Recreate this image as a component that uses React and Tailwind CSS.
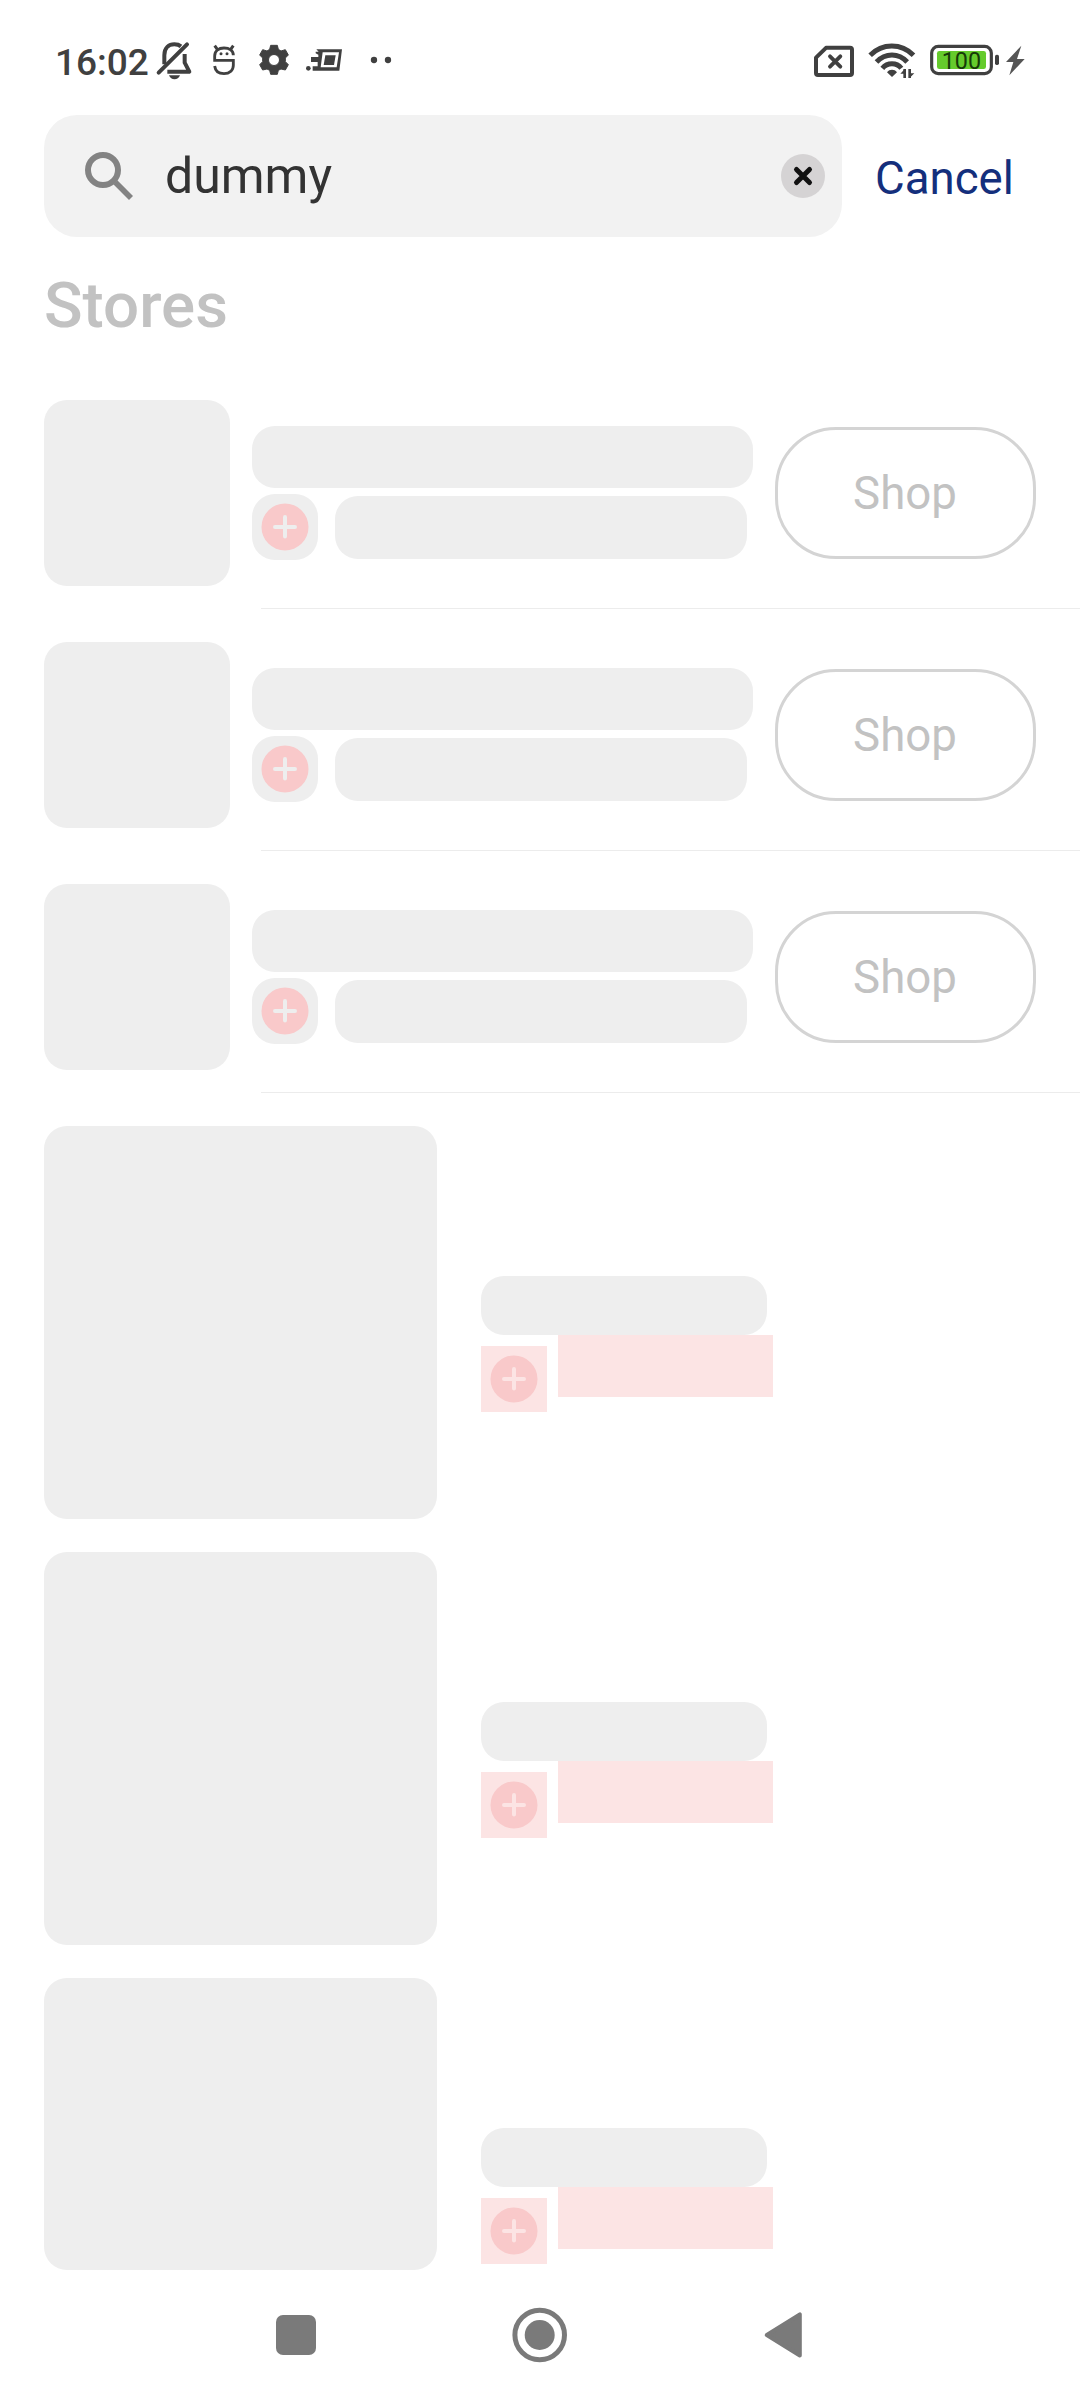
import React from "react";

const INK = "#404040";

function BellOff() {
  return (
    <svg className="h-10 w-10" viewBox="345 33 120 120" fill="none" stroke={INK} strokeWidth="12">
      <path d="M356 128 L441 43" strokeLinecap="round" />
      <path d="M373 103 V76 C373 53 387 43 403 43 C411 43 418 45 423 49" />
      <path d="M434 72 V98 L448 125 H382" strokeLinejoin="round" />
      <path d="M387 136 H420 C417 144 411 148 403.500 148 C396 148 390 144 387 136 Z" fill={INK} stroke="none" />
    </svg>
  );
}

function Ghost() {
  return (
    <svg className="h-10 w-[30px]" viewBox="510 33 90 120" fill="none" stroke={INK} strokeWidth="8.500">
      <path d="M580 76 C580 62 568 54 552 54 C536 54 524 62 524 78 V91 H580 V106 C580 122 568 131 552 131 C537 131 526 124 524 108" />
      <path d="M524 47 L532 58 M580 47 L572 58" strokeWidth="9" />
      <circle cx="543" cy="71" r="4.500" fill={INK} stroke="none" />
      <circle cx="561" cy="71" r="4.500" fill={INK} stroke="none" />
    </svg>
  );
}

function Gear() {
  return (
    <svg className="h-10 w-[34px]" viewBox="51 33 102 120">
      <path
        fillRule="evenodd"
        fill={INK}
        stroke={INK}
        strokeWidth="3"
        strokeLinejoin="round"
        d="M92 46 H112 L115 58 L123 63 L136 59 L145 75 L136 84 V95 L145 104 L136 120 L123 117 L115 121 L112 133 H92 L89 121 L81 117 L68 120 L59 104 L68 95 V84 L59 75 L68 59 L81 63 L89 58 Z M102 73.500 A16.500 16.500 0 1 0 102 106.500 A16.500 16.500 0 1 0 102 73.500 Z"
      />
    </svg>
  );
}

function SpeedCard() {
  return (
    <svg className="h-10 w-10" viewBox="195 33 120 120" fill={INK}>
      <path
        fillRule="evenodd"
        d="M229 58 H306 L298 122 H218 V109 H233 V96 H213 V81 H235 V74 L227 70 V65 H236 Z M248 67 L242 112 H290 L297 67 Z"
      />
      <path d="M256 76 H287 L282 105 H251 Z" />
      <circle cx="205" cy="115" r="7" />
    </svg>
  );
}

function Dots() {
  return (
    <svg className="h-10 w-[25px]" viewBox="387 33 75 120" fill={INK}>
      <circle cx="402" cy="90" r="9.500" />
      <circle cx="444" cy="90" r="9.500" />
    </svg>
  );
}

function SimOff() {
  return (
    <svg className="h-10 w-11" viewBox="36 33 132 120" fill="none" stroke={INK} strokeLinejoin="round">
      <path d="M78 53.500 H150 Q156 53.500 156 59 V129 Q156 135 150 135 H54 Q48 135 48 129 V83 Z" strokeWidth="12" />
      <path d="M90 79 L121 110 M121 79 L90 110" strokeWidth="11.500" strokeLinecap="round" />
    </svg>
  );
}

function Wifi() {
  return (
    <svg className="h-10 w-[50px]" viewBox="201 33 150 120" fill="none" stroke={INK} strokeWidth="15">
      <path d="M210.500 76 C247 39 304 39 340.500 76" />
      <path d="M229.500 96 C256 68 296 68 321.500 96" />
      <path d="M247 115 C262 97 290 97 304 115" />
      <path d="M261 127 C268 117 284 117 291 127 L276 141 Z" fill={INK} stroke="none" />
      <path d="M314 117 V144 M329 117 V144" strokeWidth="8" />
      <path d="M301 131 L315 116 V131 Z M343 130 L328 145 V130 Z" fill={INK} stroke="none" />
    </svg>
  );
}

function Battery() {
  return (
    <svg className="h-10 w-[72px]" viewBox="384 33 216 120">
      <rect x="395" y="49" width="179" height="82" rx="20" fill="#fff" stroke={INK} strokeWidth="9.500" />
      <rect x="411" y="63" width="147" height="54" rx="7" fill="#65cb2c" />
      <rect x="585" y="74" width="12" height="31" rx="5" fill={INK} />
      <text x="484" y="117" textAnchor="middle" fontSize="70" fontFamily="Roboto" fill="#163a08">
        100
      </text>
    </svg>
  );
}

function Bolt() {
  return (
    <svg className="h-10 w-[22px]" viewBox="612 33 66 120" fill="#555">
      <path d="M664 47 L618 96 H640 L628 136 L674 87 H651 Z" />
    </svg>
  );
}

function StatusBar() {
  return (
    <div className="flex h-[115px] items-start pt-[41px] pl-[55px]">
      <span className="w-[100px] pt-[2px] text-[37px] leading-[40px] font-medium text-[#404040]">16:02</span>
      <BellOff />
      <div className="ml-[15px] flex gap-[17px]">
        <Ghost />
        <Gear />
      </div>
      <div className="ml-[14px] flex gap-6">
        <SpeedCard />
        <Dots />
      </div>
      <div className="ml-auto flex pr-[54px]">
        <SimOff />
        <div className="ml-[11px] flex gap-[11px]">
          <Wifi />
          <Battery />
        </div>
        <div className="ml-1">
          <Bolt />
        </div>
      </div>
    </div>
  );
}

function SearchBar() {
  return (
    <div className="flex h-[122px] items-center pl-11">
      <div className="flex h-full w-[798px] items-center rounded-[33px] bg-[#f2f2f2] pr-[17px] pl-[41px]">
        <svg className="h-[48px] w-[48px] shrink-0" viewBox="165 153 144 144" fill="none" stroke="#838383">
          <circle cx="219" cy="207" r="45" strokeWidth="18" />
          <path d="M256 244 L303 291" strokeWidth="17" />
        </svg>
        <span className="ml-[32px] flex-1 text-[50px] leading-[60px] text-[#333]">dummy</span>
        <svg className="h-11 w-11" viewBox="0 0 44 44">
          <circle cx="22" cy="22" r="22" fill="#d5d3d4" />
          <path d="M15.500 15.500 L28.500 28.500 M28.500 15.500 L15.500 28.500" stroke="#111" strokeWidth="5" strokeLinecap="round" />
        </svg>
      </div>
      <span className="ml-[33px] pt-[5px] text-[45.6px] leading-[56px] text-[#142f7c]">Cancel</span>
    </div>
  );
}

function PlusBadge() {
  return (
    <svg className="h-[66px] w-[66px]" viewBox="0 0 66 66">
      <path
        fill="#f9c9ca"
        fillRule="evenodd"
        d="M33 9.500 A23.500 23.500 0 1 0 33 56.500 A23.500 23.500 0 1 0 33 9.500 Z M31 31 V23 A2 2 0 0 1 35 23 V31 H43 A2 2 0 0 1 43 35 H35 V42.500 A2 2 0 0 1 31 42.500 V35 H23 A2 2 0 0 1 23 31 Z"
      />
    </svg>
  );
}

function StoreRow() {
  return (
    <div className="h-[242px]">
      <div className="flex h-[208px] pl-11">
        <div className="h-[186px] w-[186px] rounded-[23px] bg-[#eee]" />
        <div className="ml-[22px] w-[501px] pt-[26px]">
          <div className="h-[62px] rounded-[23px] bg-[#eee]" />
          <div className="mt-[6px] flex">
            <div className="h-[66px] w-[66px] rounded-[23px] bg-[#eee]">
              <PlusBadge />
            </div>
            <div className="mt-[2px] ml-[17px] h-[63px] w-[412px] rounded-[23px] bg-[#eee]" />
          </div>
        </div>
        <button className="mt-[27px] ml-[22px] flex h-[132px] w-[261px] items-center justify-center rounded-[61px] border-[3px] border-[#d4d4d4] pt-[2px] pr-px text-[45.6px] text-[#c2c2c2]">
          Shop
        </button>
      </div>
      <div className="ml-[261px] h-px bg-[#ececec]" />
    </div>
  );
}

function ProductInfo() {
  return (
    <div className="ml-11 pt-[150px]">
      <div className="h-[59px] w-[286px] rounded-[23px] bg-[#eee]" />
      <div className="flex">
        <div className="mt-[11px] h-[66px] w-[66px] bg-[#fce4e4]">
          <PlusBadge />
        </div>
        <div className="ml-[11px] h-[62px] w-[215px] bg-[#fce4e4]" />
      </div>
    </div>
  );
}

function ProductRow() {
  return (
    <div className="flex h-[426px]">
      <div className="h-[393px] w-[393px] rounded-[23px] bg-[#eee]" />
      <ProductInfo />
    </div>
  );
}

function NavBar() {
  return (
    <div className="flex h-[130px] items-center pl-[276px]">
      <div className="h-10 w-10 rounded-[7px] bg-[#7a7a7a]" />
      <svg className="ml-[196px] h-14 w-14" viewBox="0 0 56 56">
        <circle cx="27.700" cy="28" r="24.800" fill="none" stroke="#7a7a7a" strokeWidth="5" />
        <circle cx="27.700" cy="28" r="15" fill="#7a7a7a" />
      </svg>
      <svg className="ml-[196px] h-[46px] w-[38px]" viewBox="0 0 38 46" fill="#7a7a7a" stroke="#7a7a7a" strokeWidth="4" strokeLinejoin="round">
        <path d="M35.800 2.400 V43.600 L2.800 23 Z" />
      </svg>
    </div>
  );
}

export default function App() {
  return (
    <div className="h-[2400px] w-[1080px] overflow-hidden bg-white font-['Roboto',sans-serif]">
      <StatusBar />
      <SearchBar />
      <h1 className="h-[163px] pt-[31px] pl-11 text-[63.7px] leading-[76px] font-medium text-[#c2c2c2]">Stores</h1>
      <StoreRow />
      <StoreRow />
      <StoreRow />
      <div className="h-[1144px] pl-11">
        <ProductRow />
        <ProductRow />
        <div className="flex h-[292px]">
          <div className="h-[292px] w-[393px] rounded-[23px] bg-[#eee]" />
          <ProductInfo />
        </div>
      </div>
      <NavBar />
    </div>
  );
}
